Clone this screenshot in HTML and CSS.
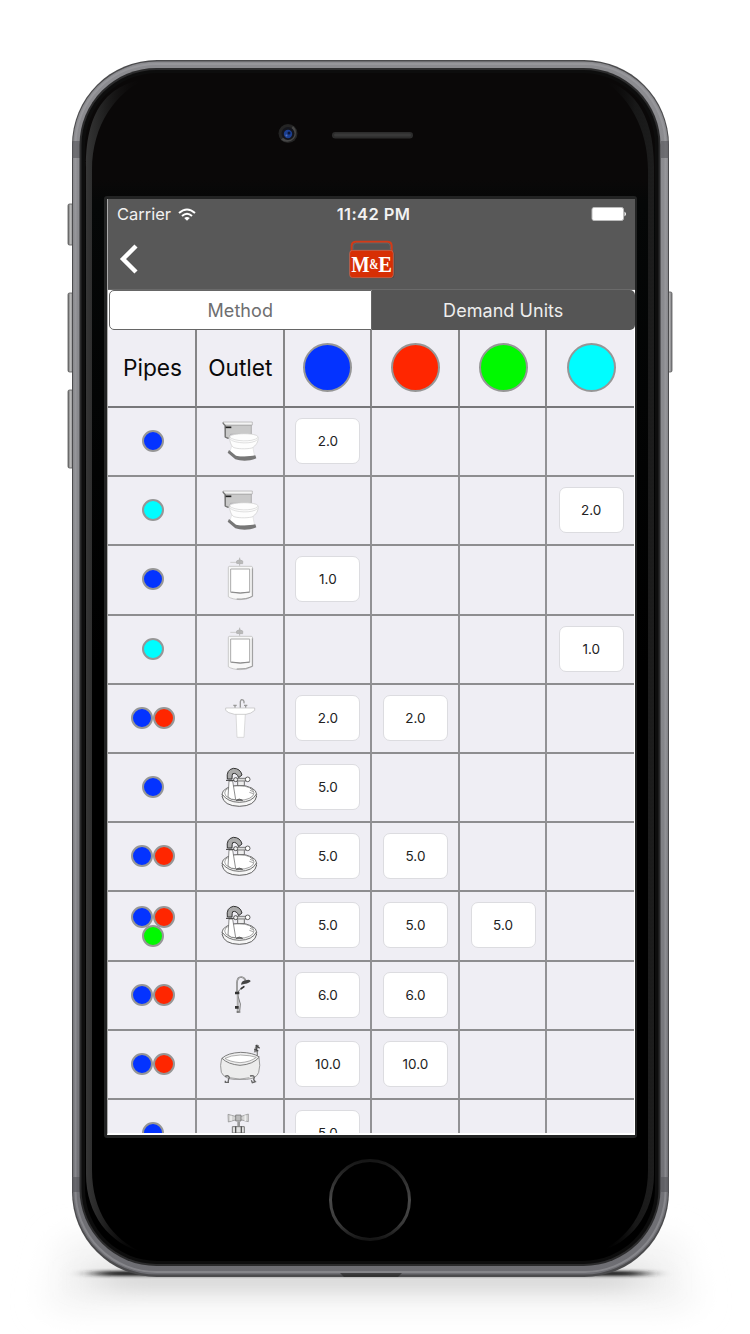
FILE: index.html
```html
<!DOCTYPE html>
<html lang="en">
<head>
<meta charset="utf-8">
<title>Demand Units</title>
<link rel="stylesheet" href="styles.css">
</head>
<body>
<svg class="defs" width="0" height="0" aria-hidden="true">
  <symbol id="toilet" viewBox="60 34 180 180">
    <path d="M104 76H184V104H122L116 117L105 112Z" fill="#c9c9c9" stroke="#999" stroke-width="2"/>
    <path d="M99 67H187V76H101Z" fill="#f4f4f4" stroke="#aaa" stroke-width="2"/>
    <path d="M98 69L106 78V112L115 116" fill="none" stroke="#777" stroke-width="4"/>
    <path d="M107 83H124" stroke="#222" stroke-width="5"/>
    <path d="M125 138L120 156L138 171H194L188 140Z" fill="#fff" stroke="#ddd" stroke-width="2"/>
    <path d="M119 112C118 100 202 98 204 112C206 126 198 138 186 145C168 149 140 148 130 143C122 136 119 126 119 112Z" fill="#fdfdfd" stroke="#ccc" stroke-width="2"/>
    <path d="M119 112C130 126 190 128 203 114M121 119C134 132 190 134 202 120" fill="none" stroke="#d0d0d0" stroke-width="2"/>
    <path d="M117 151L138 168C156 172 178 171 196 167L199 176C176 186 152 184 136 179L113 159Z" fill="#777"/>
  </symbol>
  <symbol id="urinal" viewBox="60 14 180 180">
    <path d="M121 54H144" stroke="#ccc" stroke-width="3"/>
    <path d="M149 40V64M140 57V50Q149 43 158 50V58Z" fill="#bbb" stroke="#b5b5b5" stroke-width="3"/>
    <path d="M118 66H184Q188 66 188 72V156Q170 167 150 166Q126 165 115 157V70Q115 66 118 66Z" fill="#f8f8f8" stroke="#b4b4b4" stroke-width="2"/>
    <path d="M187 72V156Q168 166 140 164" fill="none" stroke="#999" stroke-width="3"/>
    <path d="M122 74H179V144Q150 149 122 144Z" fill="#fff" stroke="#aaa" stroke-width="3"/>
    <path d="M124 143Q150 149 178 143" fill="none" stroke="#888" stroke-width="3"/>
  </symbol>
  <symbol id="pedestal" viewBox="60 429 180 180">
    <path d="M151 488V470Q154 460 160 466Q163 469 162 475M135 488V479M167 488V479M130 481H140M162 481H172" fill="none" stroke="#999" stroke-width="4"/>
    <path d="M138 506L141 577H162L166 506Z" fill="#fff" stroke="#ccc" stroke-width="2"/>
    <path d="M107 489H194V496Q184 506 168 508H134Q112 504 107 496Z" fill="#fff" stroke="#bbb" stroke-width="2"/>
  </symbol>
  <symbol id="basin" viewBox="60 22 180 180">
    <ellipse cx="148" cy="134" rx="52" ry="27" fill="#fff" stroke="#555" stroke-width="2.5"/>
    <path d="M96 139Q101 169 148 170Q195 169 200 139" fill="#f6f6f6" stroke="#444" stroke-width="2.5"/>
    <path d="M97 134Q112 157 148 158Q188 157 199 133" fill="none" stroke="#555" stroke-width="2.5"/>
    <ellipse cx="148" cy="130" rx="44" ry="22" fill="#fff" stroke="#777" stroke-width="2"/>
    <path d="M138 152Q148 144 158 152Z" fill="#888" stroke="#444" stroke-width="2"/>
    <path d="M117 94L114 142Q122 151 137 150L128 94Z" fill="#fff" stroke="#555" stroke-width="2"/>
    <path d="M143 95V108H163V95" fill="#eee" stroke="#555" stroke-width="2.5"/>
    <path d="M112 88Q108 60 130 56Q151 56 156 76L146 84Q140 68 128 72Q126 76 126 88Z" fill="#aaa" stroke="#333" stroke-width="3"/>
    <path d="M108 92H132M132 90H168" stroke="#333" stroke-width="3"/>
    <path d="M133 86H168V94H133Z" fill="#ddd" stroke="#444" stroke-width="2"/>
    <circle cx="137" cy="90" r="6" fill="#eee" stroke="#444" stroke-width="2.5"/>
    <circle cx="173" cy="89" r="7" fill="#fff" stroke="#444" stroke-width="2.5"/>
    <path d="M180 116L190 120M180 122L190 126M178 128L190 132" stroke="#777" stroke-width="2"/>
  </symbol>
  <symbol id="shower" viewBox="60 15 180 180">
    <path d="M141 98V68Q142 51 154 51Q163 52 167 62" fill="none" stroke="#777" stroke-width="5"/>
    <path d="M141 98V68Q142 51 154 51Q163 52 167 62" fill="none" stroke="#ddd" stroke-width="1.5"/>
    <path d="M153 74Q154 61 171 60Q181 58 182 64Q174 72 153 74Z" fill="#444"/>
    <path d="M163 79L148 90L142 101L151 132L149 154" fill="none" stroke="#777" stroke-width="3"/>
    <path d="M163 79L152 87" stroke="#333" stroke-width="5"/>
    <path d="M143 100V158" stroke="#888" stroke-width="5"/>
    <path d="M143 102V155" stroke="#ddd" stroke-width="1.5"/>
    <path d="M135 99H148M135 142H146" stroke="#333" stroke-width="8"/>
    <path d="M140 156H151" stroke="#666" stroke-width="4"/>
  </symbol>
  <symbol id="bath" viewBox="60 223 180 180">
    <path d="M202 292V275L194 276L197 262L207 258" fill="none" stroke="#888" stroke-width="4"/>
    <path d="M193 269L205 274M197 257L209 266M201 255L200 272" stroke="#444" stroke-width="4"/>
    <path d="M95 296Q89 318 94 338Q104 358 132 359H170Q200 357 206 338Q212 318 207 294Z" fill="#ececec" stroke="#888" stroke-width="2.5"/>
    <path d="M96 296Q112 280 152 278Q190 279 208 292Q190 314 150 317Q114 314 96 296Z" fill="#eee" stroke="#666" stroke-width="2.5"/>
    <path d="M105 296Q122 287 151 286Q184 287 199 293Q181 307 150 309Q118 306 105 296Z" fill="#fff" stroke="#888" stroke-width="2"/>
    <path d="M105 350Q116 345 118 354Q114 360 115 368H106V363M180 349Q193 346 193 354Q188 359 196 366L187 369L184 362" fill="none" stroke="#666" stroke-width="4"/>
    <path d="M120 354Q150 363 178 354" fill="none" stroke="#888" stroke-width="2"/>
  </symbol>
  <symbol id="tap" viewBox="60 430 180 180">
    <path d="M114 464L140 471H151L175 463V486L151 480H140L115 487Z" fill="#d4d4d4" stroke="#888" stroke-width="2"/>
    <path d="M123 468V483M166 467V484" stroke="#eee" stroke-width="5"/>
    <path d="M137 466H153V484H137Z" fill="#bbb" stroke="#666" stroke-width="2"/>
    <path d="M142 485H150V500H142Z" fill="#999"/>
    <path d="M127 501H163V520H127Z" fill="#e2e2e2" stroke="#777" stroke-width="3"/>
    <path d="M137 500V560M154 500V560" stroke="#555" stroke-width="4"/>
  </symbol>
</svg>

<main class="stage">
  <svg class="phone" viewBox="0 0 750 1334" aria-hidden="true">
    <defs>
      <linearGradient id="metal" x1="0" y1="0" x2="0" y2="1"><stop offset="0" stop-color="#8c8c90"/><stop offset=".5" stop-color="#88898d"/><stop offset="1" stop-color="#6d6d72"/></linearGradient>
      <linearGradient id="shineL" gradientUnits="userSpaceOnUse" x1="86" y1="0" x2="142" y2="0"><stop offset="0" stop-color="#363636"/><stop offset=".3" stop-color="#222"/><stop offset="1" stop-color="#0a0808" stop-opacity="0"/></linearGradient>
      <linearGradient id="shineR" gradientUnits="userSpaceOnUse" x1="655" y1="0" x2="605" y2="0"><stop offset="0" stop-color="#1d1d1d"/><stop offset=".4" stop-color="#181818"/><stop offset="1" stop-color="#080808" stop-opacity="0"/></linearGradient>
      <linearGradient id="ring" x1="0" y1="0" x2="0" y2="1"><stop offset="0" stop-color="#161616"/><stop offset=".5" stop-color="#484848"/><stop offset=".8" stop-color="#3a3a3a"/><stop offset="1" stop-color="#151515"/></linearGradient>
      <linearGradient id="face" x1="0" y1="0" x2="0" y2="1"><stop offset="0" stop-color="#0a0808"/><stop offset=".09" stop-color="#0a0808"/><stop offset=".11" stop-color="#050707"/><stop offset=".5" stop-color="#000"/></linearGradient>
      <linearGradient id="key" x1="0" y1="0" x2="1" y2="0"><stop offset="0" stop-color="#666"/><stop offset=".4" stop-color="#bbb"/><stop offset="1" stop-color="#77777b"/></linearGradient>
      <filter id="soft" x="-20%" y="-100%" width="140%" height="300%"><feGaussianBlur stdDeviation="18 14"/></filter>
      <filter id="under" x="-20%" y="-200%" width="140%" height="500%"><feGaussianBlur stdDeviation="22 8"/></filter>
      <filter id="contact" x="-20%" y="-200%" width="140%" height="500%"><feGaussianBlur stdDeviation="12 1.8"/></filter>
      <clipPath id="body"><rect x="72" y="60" width="597" height="1217" rx="85"/></clipPath>
    </defs>
    <path d="M66 1236H676L692 1310H50Z" fill="#f3f3f3" filter="url(#soft)"/>
    <rect x="100" y="1266" width="540" height="26" fill="#dadada" filter="url(#under)"/>
    <rect x="96" y="1271" width="548" height="5" rx="2.500" fill="#222" filter="url(#contact)"/>
    <g fill="url(#key)" stroke="#555" stroke-width=".8">
      <rect x="68" y="204" width="6" height="41" rx="1.5"/>
      <rect x="68" y="293" width="6" height="79" rx="1.5"/>
      <rect x="68" y="390" width="6" height="78" rx="1.5"/>
      <rect x="667" y="292" width="5" height="80" rx="1.5"/>
    </g>
    <rect x="72" y="60" width="597" height="1217" rx="85" fill="#4b4b4d"/>
    <rect x="73" y="61.5" width="595" height="1213" rx="84" fill="url(#metal)"/>
    <rect x="75.5" y="64" width="590" height="1208" rx="81" fill="none" stroke="#a5a5a9" stroke-opacity=".45" stroke-width="2"/>
    <g clip-path="url(#body)" fill="#55555a" fill-opacity=".6"><path d="M72 141H80V158H72ZM661 141H669V158H661ZM72 1177H80V1192H72ZM661 1177H669V1192H661Z"/><path d="M340 1273H402L398 1277H344Z" fill="#222"/></g>
    <rect x="79.5" y="68" width="581" height="1198" rx="77" fill="#2b2b2c"/>
    <rect x="81.500" y="70" width="577" height="1194" rx="75" fill="#0d0d0d"/>
    <rect x="85" y="73" width="570" height="1188" rx="72" fill="url(#face)"/>
    <path d="M86 167C86 105 112 84 146 79C116 92 92 125 92 170V1170C92 1212 113 1240 142 1252C110 1244 86 1215 86 1174Z" fill="url(#shineL)"/>
    <path d="M654 167C654 110 630 86 600 79C628 94 648 128 648 170V1170C648 1212 627 1240 598 1252C630 1244 654 1215 654 1174Z" fill="url(#shineR)"/>
    <circle cx="288" cy="133.500" r="9.500" fill="#242424"/>
    <path d="M293 126A9 9 0 0 1 281 139.500L288 134Z" fill="#555" opacity=".7"/>
    <circle cx="288" cy="133.500" r="6.500" fill="#14151c"/>
    <circle cx="288" cy="134" r="4.200" fill="#1b3f92"/>
    <circle cx="289" cy="133" r="1.500" fill="#0b1638"/><circle cx="286.500" cy="135.500" r="1" fill="#5472b8"/>
    <rect x="332" y="132" width="81" height="6.500" rx="3.200" fill="#2c2c2c"/><rect x="334" y="133.500" width="77" height="3" rx="1.500" fill="#393939"/>
    <rect x="104" y="196" width="533" height="942" rx="3" fill="#222323"/>
    <circle cx="370" cy="1200" r="39.500" fill="#000" stroke="url(#ring)" stroke-width="3"/>
  </svg>

  <section class="screen">
    <header class="topbar">
      <div class="status">
        <div class="carrier"><span>Carrier</span>
          <svg class="wifi" viewBox="0 0 18 13"><path d="M1 5Q9-2 17 5" fill="none" stroke="#fff" stroke-width="2"/><path d="M4 8Q9 3.500 14 8" fill="none" stroke="#fff" stroke-width="2"/><path d="M6.200 10Q9 7.800 11.800 10L9 12.800Z" fill="#fff"/></svg>
        </div>
        <div class="clock">11:42 PM</div>
        <svg class="battery" viewBox="0 0 36 14"><rect x="1" y=".5" width="31.500" height="13" rx="2" fill="#fff" stroke="#bbb"/><path d="M33.500 4.500Q36.500 7 33.500 9.500Z" fill="#fff"/></svg>
      </div>
      <div class="nav">
        <svg class="back" viewBox="0 0 20 30"><path d="M17 2L4 15L17 28" fill="none" stroke="#fff" stroke-width="4.400"/></svg>
        <svg class="logo" viewBox="267 418 138 117">
          <path d="M275 458V434Q276 424 286 423H384Q395 424 395 436V458" fill="#555" stroke="#d33a17" stroke-width="6"/>
          <path d="M279 446V436Q280 428 290 427H382Q391 428 391 438V446" fill="none" stroke="#777" stroke-width="1.500"/>
          <rect x="270" y="450" width="133" height="83" rx="10" fill="#444"/>
          <rect x="269" y="449" width="131" height="82" rx="9" fill="#d72f05" stroke="#c87460" stroke-width="2"/>
          <text class="logo-text" y="515" font-size="72" fill="#fff"><tspan x="274" textLength="55" lengthAdjust="spacingAndGlyphs">M</tspan><tspan x="328" y="504" font-size="42" textLength="28" lengthAdjust="spacingAndGlyphs">&amp;</tspan><tspan x="355" y="515" textLength="41" lengthAdjust="spacingAndGlyphs">E</tspan></text>
        </svg>
      </div>
    </header>

    <div class="tabs"><div class="tab active">Method</div><div class="tab">Demand Units</div></div>

    <div class="table">
      <div class="row head"><div>Pipes</div><div>Outlet</div><div><i class="disc blue"></i></div><div><i class="disc red"></i></div><div><i class="disc green"></i></div><div><i class="disc cyan"></i></div></div>
      <div class="row"><div><i class="dot blue"></i></div><div><svg class="icon"><use href="#toilet"/></svg></div><div><b class="field">2.0</b></div><div></div><div></div><div></div></div>
      <div class="row"><div><i class="dot cyan"></i></div><div><svg class="icon"><use href="#toilet"/></svg></div><div></div><div></div><div></div><div><b class="field">2.0</b></div></div>
      <div class="row"><div><i class="dot blue"></i></div><div><svg class="icon"><use href="#urinal"/></svg></div><div><b class="field">1.0</b></div><div></div><div></div><div></div></div>
      <div class="row"><div><i class="dot cyan"></i></div><div><svg class="icon"><use href="#urinal"/></svg></div><div></div><div></div><div></div><div><b class="field">1.0</b></div></div>
      <div class="row"><div><i class="dot blue"></i><i class="dot red"></i></div><div><svg class="icon"><use href="#pedestal"/></svg></div><div><b class="field">2.0</b></div><div><b class="field">2.0</b></div><div></div><div></div></div>
      <div class="row"><div><i class="dot blue"></i></div><div><svg class="icon"><use href="#basin"/></svg></div><div><b class="field">5.0</b></div><div></div><div></div><div></div></div>
      <div class="row"><div><i class="dot blue"></i><i class="dot red"></i></div><div><svg class="icon"><use href="#basin"/></svg></div><div><b class="field">5.0</b></div><div><b class="field">5.0</b></div><div></div><div></div></div>
      <div class="row"><div class="trio"><i class="dot blue"></i><i class="dot red"></i><i class="dot green"></i></div><div><svg class="icon"><use href="#basin"/></svg></div><div><b class="field">5.0</b></div><div><b class="field">5.0</b></div><div><b class="field">5.0</b></div><div></div></div>
      <div class="row"><div><i class="dot blue"></i><i class="dot red"></i></div><div><svg class="icon"><use href="#shower"/></svg></div><div><b class="field">6.0</b></div><div><b class="field">6.0</b></div><div></div><div></div></div>
      <div class="row"><div><i class="dot blue"></i><i class="dot red"></i></div><div><svg class="icon"><use href="#bath"/></svg></div><div><b class="field">10.0</b></div><div><b class="field">10.0</b></div><div></div><div></div></div>
      <div class="row"><div><i class="dot blue"></i></div><div><svg class="icon"><use href="#tap"/></svg></div><div><b class="field">5.0</b></div><div></div><div></div><div></div></div>
    </div>
  </section>
</main>
</body>
</html>
```

FILE: styles.css
```css
* { box-sizing: border-box; }
body { margin: 0; background: #fff; font-family: Inter, "Liberation Sans", sans-serif; overflow: hidden; }
.defs { display: block; height: 0; }
.stage { display: grid; width: 750px; height: 1334px; }
.phone { grid-area: 1 / 1; width: 750px; height: 1334px; }
.screen {
  grid-area: 1 / 1;
  margin: 199px 0 0 107px;
  width: 528px;
  height: 936px;
  border: solid #fff;
  border-width: 0 0 2px 1px;
  border-left-color: #aaa;
  background: #efeef4;
  display: flex;
  flex-direction: column;
  overflow: hidden;
}
.topbar { height: 91px; flex: none; background: #585858; border-bottom: 1px solid #6a6a6a; }
.status { display: grid; grid-template-columns: 1fr auto 1fr; align-items: center; height: 31px; padding: 0 8px 0 9px; color: #f2f2f2; }
.carrier { display: flex; align-items: center; gap: 7px; font-size: 16.500px; }
.carrier span, .clock { margin-top: -1px; }
.wifi { width: 18px; height: 13px; margin-top: -1px; }
.clock { font-size: 16.500px; font-weight: 600; letter-spacing: .4px; padding-left: 3px; }
.battery { width: 36px; height: 14px; justify-self: end; margin-top: -1px; }
.nav { display: grid; grid-template-columns: 1fr 46px 1fr; align-items: center; height: 58px; padding-left: 11px; padding-right: 11px; }
.back { width: 20px; height: 30px; }
.logo { width: 46px; height: 39px; }
.logo-text { font-family: "Liberation Serif", serif; font-weight: 700; }
.tabs { flex: none; display: grid; grid-template-columns: 262.500px 1fr; height: 40px; padding-left: 1px; background: #fff; }
.tab { display: grid; place-items: center; background: #555; color: #eee; font-size: 18px; border-radius: 0 5px 5px 0; letter-spacing: .05px; }
.tab.active { background: #fff; color: #6e6e70; border: 1px solid #666; border-radius: 5px 0 0 5px; }
.table { flex: 1; min-height: 0; overflow: hidden; border-right: 1px solid #fff; }
.row { display: grid; grid-template-columns: 89px repeat(4, 87.600px) 1fr; height: 69.200px; }
.row > div { display: flex; align-items: center; justify-content: center; border-right: 2px solid #929295; border-bottom: 2px solid #8d8d8f; padding-bottom: 1px; padding-left: 1px; }
.row > div:first-child { padding-left: 2px; }
.row > div:last-child { border-right: 0; }
.row.head { height: 78px; font-size: 22.700px; color: #0a0a0a; }
.row.head > div { border-right-color: #858587; border-bottom-color: #77777a; }
.disc, .dot { flex: none; border-radius: 50%; border: 2px solid #969696; }
.disc { width: 49px; height: 49px; }
.dot { width: 22px; height: 22px; }
.blue { background: #0433ff; }
.red { background: #ff2600; }
.green { background: #00f900; }
.cyan { background: #00fdff; }
.row > div.trio { flex-wrap: wrap; align-content: center; padding-left: 21px; padding-right: 19px; }
.trio .dot { margin-bottom: -3px; }
.icon { width: 60px; height: 60px; }
.field { display: grid; place-items: center; width: 65px; height: 46px; border: 1px solid #dcdce0; border-radius: 7px; background: #fff; font-size: 13.500px; font-weight: 400; color: #222; }
```
